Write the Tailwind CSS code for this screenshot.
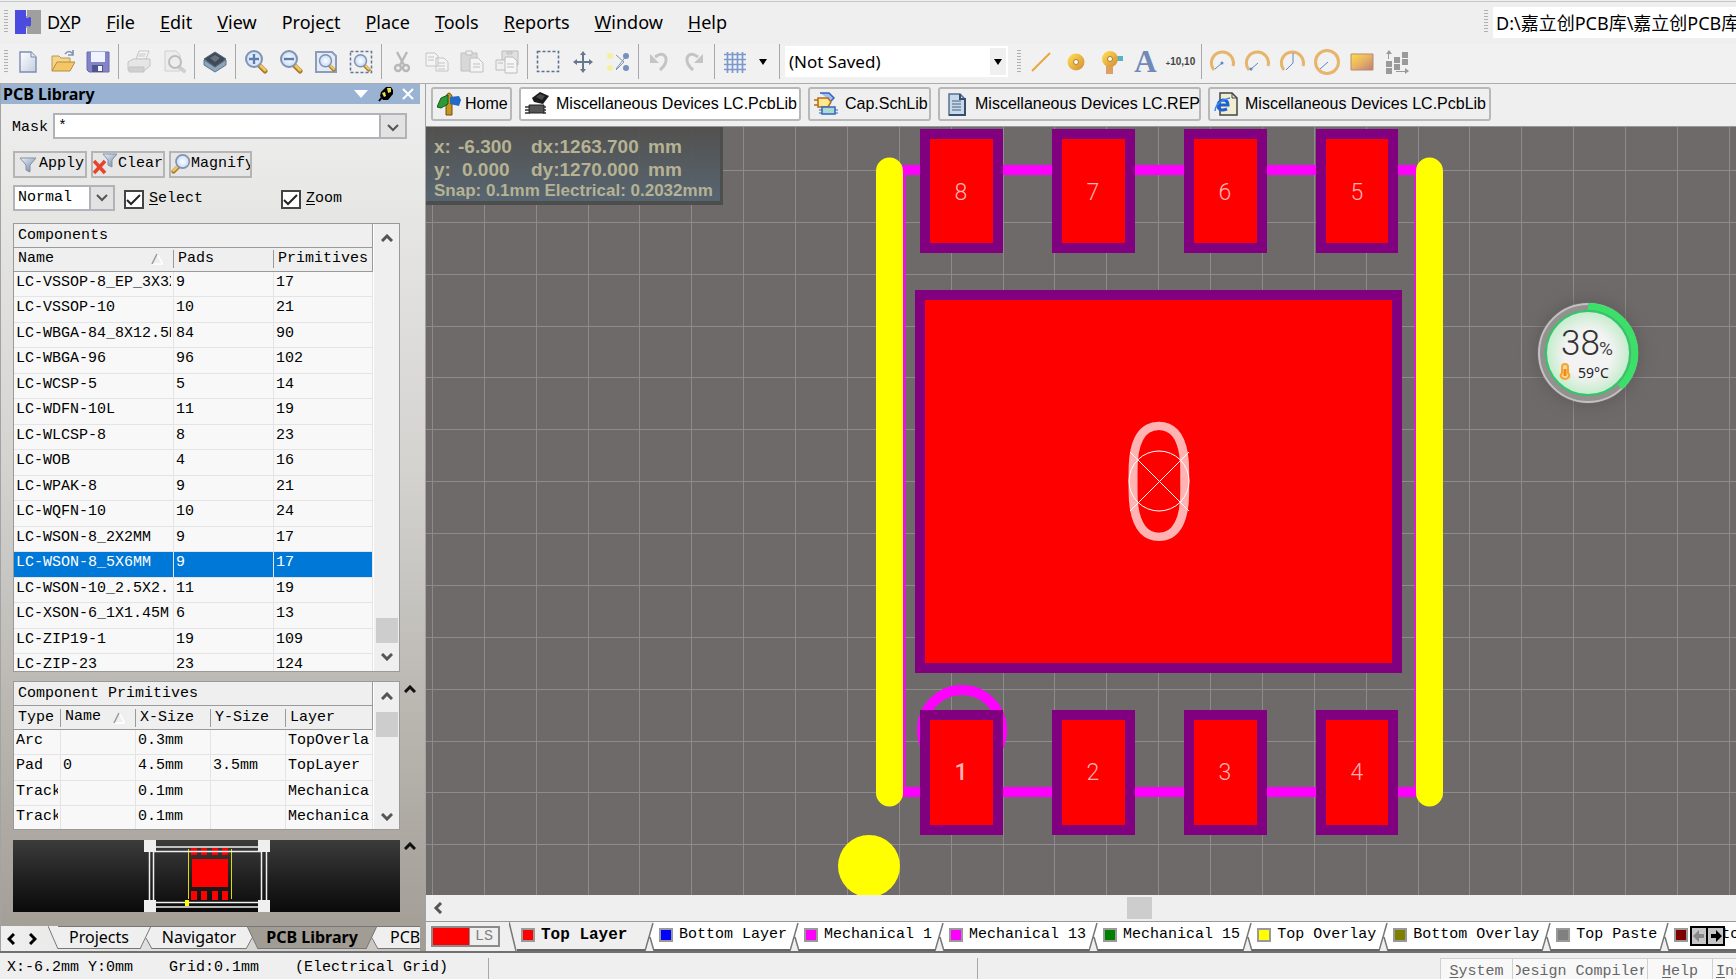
<!DOCTYPE html>
<html lang="en">
<head>
	<meta charset="UTF-8" />
	<meta name="viewport" content="width=device-width, initial-scale=1.0" />
	<script src="https://cdn.jsdelivr.net/npm/@tailwindcss/browser@4"></script>
	<title>PCB Library</title>
</head>

<body class="flex flex-col h-screen overflow-hidden bg-[#efefef] text-black font-['Noto_Sans','Noto_Sans_CJK_SC',sans-serif]">

	<!-- shared gradients -->
	<svg class="absolute w-0 h-0" aria-hidden="true">
		<defs>
			<linearGradient id="gold" x1="0" y1="0" x2="1" y2="1"><stop offset="0" stop-color="#fbd34a" /><stop offset="1" stop-color="#d99a3c" /></linearGradient>
			<linearGradient id="goldPurple" x1="0" y1="0" x2="1" y2="1"><stop offset="0" stop-color="#ffe03c" /><stop offset=".5" stop-color="#e8b268" /><stop offset="1" stop-color="#b98070" /></linearGradient>
			<linearGradient id="paper" x1="0" y1="0" x2="1" y2="1"><stop offset="0" stop-color="#ffffff" /><stop offset="1" stop-color="#c3cde0" /></linearGradient>
			<linearGradient id="steel" x1="0" y1="0" x2="1" y2="1"><stop offset="0" stop-color="#eef3fb" /><stop offset="1" stop-color="#6b7f9e" /></linearGradient>
			<radialGradient id="lens"><stop offset="0" stop-color="#ffffff" /><stop offset="1" stop-color="#c5dcfa" /></radialGradient>
			<radialGradient id="gauge"><stop offset=".55" stop-color="#f3f3f3" /><stop offset="1" stop-color="#c4eccb" /></radialGradient>
			<symbol id="glass" viewBox="0 0 24 24">
				<path d="M15 15l6 6" stroke="#a87928" stroke-width="5" stroke-linecap="round" />
				<path d="M16 15l5 5" stroke="#f0c566" stroke-width="3" stroke-linecap="round" />
				<circle cx="10" cy="9" r="8" fill="url(#lens)" stroke="#8193b0" stroke-width="2" />
			</symbol>
		</defs>
	</svg>

	<!-- menu bar -->
	<header class="flex items-center h-[43px] shrink-0 mt-px pb-0.5 border-t border-[#c3c7c7]">
		<div class="w-1 h-6 ml-1 bg-[repeating-linear-gradient(#b0b0b0_0_1px,#efefef_1px_3px)]"></div>
		<svg class="w-[26px] h-6 ml-[7px]" viewBox="0 0 26 24"><path fill="#a09f9f" d="M11 0h15v24H11z" /><path fill="#4b4be0" d="M0 0h11v8h2q2-2 3 0v7q-1 3-3 1h-2v8H0z" /><path fill="#efefef" d="M11 0h1v6h-1zM11 18h1v6h-1z" /></svg>
		<nav class="flex gap-[25px] ml-1.5 text-lg leading-6">
			<a href="#">D<u class="underline-offset-2">X</u>P</a>
			<a href="#"><u class="underline-offset-2">F</u>ile</a>
			<a href="#"><u class="underline-offset-2">E</u>dit</a>
			<a href="#"><u class="underline-offset-2">V</u>iew</a>
			<a href="#">Proje<u class="underline-offset-2">c</u>t</a>
			<a href="#"><u class="underline-offset-2">P</u>lace</a>
			<a href="#"><u class="underline-offset-2">T</u>ools</a>
			<a href="#"><u class="underline-offset-2">R</u>eports</a>
			<a href="#"><u class="underline-offset-2">W</u>indow</a>
			<a href="#"><u class="underline-offset-2">H</u>elp</a>
		</nav>
		<div class="w-1 h-6 ml-auto mr-[5px] bg-[repeating-linear-gradient(#b0b0b0_0_1px,#efefef_1px_3px)]"></div>
		<input aria-label="Document path" class="w-[243px] h-[31px] pl-[3px] bg-white text-lg outline-none" value="D:\嘉立创PCB库\嘉立创PCB库" />
	</header>

	<!-- tool bar -->
	<div class="flex items-center h-10 shrink-0 pb-1 bg-[#f1f1f1] border-b border-[#acacac]">
		<div class="w-1 h-6 ml-1 mr-0.5 bg-[repeating-linear-gradient(#b0b0b0_0_1px,#efefef_1px_3px)]"></div>
		<button aria-label="New" class="flex justify-center w-[35px]"><svg class="size-6" viewBox="0 0 24 24"><path d="M4 2h11l5 5v15H4z" fill="url(#paper)" stroke="#7c8db0" stroke-width="1.4" /><path d="M15 2v5h5" fill="#dfe6f2" stroke="#7c8db0" /></svg></button>
		<button aria-label="Open" class="flex justify-center w-[35px]"><svg class="size-6" viewBox="0 0 24 24"><path d="M1 21V6h7l2 2h9v4" fill="#f4d58a" stroke="#b99758" /><path d="M1 21l5-9h18l-5 9z" fill="#f3c766" stroke="#b58c3e" /><path d="M14 4q4-5 8 0m0-4v5h-5" fill="none" stroke="#7f92b8" stroke-width="1.6" /></svg></button>
		<button aria-label="Save" class="flex justify-center w-[35px]"><svg class="size-6" viewBox="0 0 24 24"><path d="M1 2h22v20H3l-2-2z" fill="#8383c6" stroke="#6a6aae" /><path d="M5 2h14v10H5z" fill="#eef3ff" /><path d="M6 15h11v7H6z" fill="#4c5590" /><path d="M12 16h4v5h-4z" fill="#f3f3fa" /></svg></button>
		<span class="w-px h-[35px] ml-[3px] mr-0.5 bg-[#a8a8a8]"></span>
		<button aria-label="Print" class="flex justify-center w-[35px]"><svg class="size-6" viewBox="0 0 24 24" fill="#e6e6e6" stroke="#c4c4c4"><path d="M9 9l3-8h10l-3 8z" fill="#f6f6f6" /><path d="M1 12l5-3h17v7l-5 4H1z" /><path d="M2 17h15v5H2z" fill="#d0d0d0" /><path d="M12 4h7M11 6h7" /></svg></button>
		<button aria-label="Print preview" class="flex justify-center w-[35px]"><svg class="size-6" viewBox="0 0 24 24" fill="#ededed" stroke="#cfcfcf"><path d="M3 1h11l4 4v16H3z" /><path d="M17 17l5 4" stroke-width="4" stroke-linecap="round" /><circle cx="13" cy="12" r="6" stroke="#bdbdbd" stroke-width="2" /></svg></button>
		<span class="w-px h-[35px] ml-[3px] mr-0.5 bg-[#a8a8a8]"></span>
		<button aria-label="Board layers" class="flex justify-center w-[35px]"><svg class="size-6" viewBox="0 0 24 24"><path d="M1 10l11 7 11-7v5l-11 7-11-7z" fill="#8ea5bb" stroke="#5d748a" /><path d="M1 9l11-7 11 7-11 8z" fill="#3f4a56" stroke="#566779" /><path d="M7 8l5-3 5 3-5 4z" fill="#65727f" /></svg></button>
		<span class="w-px h-[35px] ml-[3px] mr-0.5 bg-[#a8a8a8]"></span>
		<button aria-label="Zoom in" class="flex justify-center w-[35px]"><svg class="size-6" viewBox="0 0 24 24"><use href="#glass" /><path d="M10 4v10M5 9h10" stroke="#5c7cab" stroke-width="2.4" /></svg></button>
		<button aria-label="Zoom out" class="flex justify-center w-[35px]"><svg class="size-6" viewBox="0 0 24 24"><use href="#glass" /><path d="M5 9h10" stroke="#5c7cab" stroke-width="2.4" /></svg></button>
		<button aria-label="Fit document" class="flex justify-center w-[35px]"><svg class="size-6" viewBox="0 0 24 24"><path d="M2 2h16l4 4v16H2z" fill="#e3ebf7" stroke="#8d9cb8" stroke-width="2" /><g transform="translate(4 4) scale(.75)"><use href="#glass" width="24" height="24" /></g></svg></button>
		<button aria-label="Fit selection" class="flex justify-center w-[35px]"><svg class="size-6" viewBox="0 0 24 24"><path d="M1.500 1.500h21v21h-21z" fill="none" stroke="#66748f" stroke-width="1.500" stroke-dasharray="3 2" /><g transform="translate(4 4) scale(.75)"><use href="#glass" width="24" height="24" /></g></svg></button>
		<span class="w-px h-[35px] ml-[3px] mr-0.5 bg-[#a8a8a8]"></span>
		<button aria-label="Cut" class="flex justify-center w-[35px]"><svg class="size-6" viewBox="0 0 24 24" fill="none" stroke="#b8b8b8" stroke-width="2.4"><path d="M7 2l7 13M17 2l-7 13" /><circle cx="8" cy="18" r="3" /><circle cx="16" cy="18" r="3" /></svg></button>
		<button aria-label="Copy" class="flex justify-center w-[35px]"><svg class="size-6" viewBox="0 0 24 24" fill="#f4f4f4" stroke="#c4c4c4"><path d="M1 3h9l3 3v10H1zM11 8h8l4 4v9H11z" /><path d="M3 7h6M3 10h6M13 13h7M13 16h7M13 19h7" /></svg></button>
		<button aria-label="Paste" class="flex justify-center w-[35px]"><svg class="size-6" viewBox="0 0 24 24" fill="#d8d8d8" stroke="#c0c0c0"><path d="M1 3h16v18H1z" /><path d="M6 1h6v4H6z" fill="#eee" /><path d="M10 8h8l5 5v9H10z" fill="#f4f4f4" /><path d="M13 14h7M13 17h7" /></svg></button>
		<button aria-label="Paste array" class="flex justify-center w-[35px]"><svg class="size-6" viewBox="0 0 24 24" fill="#e0e0e0" stroke="#bcbcbc"><path d="M7 1h16v14H7z" /><path d="M1 10h10v10H1z" fill="#f0f0f0" /><path d="M10 7h8l4 4v12H10z" fill="#f6f6f6" /><path d="M12 2h5v2h-5zM12 14h7M12 17h7M3 13h5" /></svg></button>
		<span class="w-px h-[35px] ml-[3px] mr-0.5 bg-[#a8a8a8]"></span>
		<button aria-label="Select area" class="flex justify-center w-[35px]"><svg class="size-6" viewBox="0 0 24 24"><path d="M1.500 1.500h21v20h-21z" fill="none" stroke="#5d7090" stroke-width="1.600" stroke-dasharray="3 2" /></svg></button>
		<button aria-label="Move" class="flex justify-center w-[35px]"><svg class="size-6" viewBox="0 0 24 24" fill="#667890"><path d="M11 4h2v16h-2zM4 11h16v2H4z" /><path d="M12 1l3 4H9zM12 23l3-4H9zM2 12l4-3v6zM22 12l-4-3v6z" /></svg></button>
		<button aria-label="Clear filter" class="flex justify-center w-[35px]"><svg class="size-6" viewBox="0 0 24 24"><path d="M10 5l8 7-8 8M21 5l-11 14" fill="none" stroke="#8193b0" /><circle cx="4" cy="6" r="3" fill="#f6efa0" /><circle cx="4" cy="18" r="3" fill="#f6efa0" /><circle cx="20" cy="6" r="3" fill="#7790bd" /><circle cx="20" cy="18" r="3" fill="#7790bd" /></svg></button>
		<span class="w-px h-[35px] ml-[3px] mr-0.5 bg-[#a8a8a8]"></span>
		<button aria-label="Undo" class="flex justify-center w-[35px]"><svg class="size-6" viewBox="0 0 24 24" fill="none" stroke="#c4c4c4" stroke-width="3"><path d="M8 7q8-6 11 1 1 6-6 12" /><path d="M3 4v9h9z" fill="#c4c4c4" stroke="none" /></svg></button>
		<button aria-label="Redo" class="flex justify-center w-[35px]"><svg class="size-6" viewBox="0 0 24 24" fill="none" stroke="#c4c4c4" stroke-width="3"><path d="M16 7Q8 1 5 8q-1 6 6 12" /><path d="M21 4v9h-9z" fill="#c4c4c4" stroke="none" /></svg></button>
		<span class="w-px h-[35px] ml-[3px] mr-0.5 bg-[#a8a8a8]"></span>
		<button aria-label="Grid" class="flex justify-center w-[35px]"><svg class="size-6" viewBox="0 0 24 24"><path d="M4.500 2v21M9.500 2v21M14.500 2v21M19.500 2v21M1 4.500h22M1 9.500h22M1 14.500h22M1 19.500h22" stroke="#7b98cf" stroke-width="1.700" /></svg></button>
		<button aria-label="Grid options" class="flex justify-center w-[22px]"><svg class="w-2 h-1.5" viewBox="0 0 8 6"><path d="M0 0h8L4 6z" /></svg></button>
		<span class="w-px h-[35px] mx-[5px] bg-[#a8a8a8]"></span>
		<div class="flex items-center w-[223px] h-[31px] bg-white">
			<select aria-label="Saved filter" class="flex-1 h-full pl-1 appearance-none text-[17px] outline-none"><option>(Not Saved)</option></select>
			<span class="flex items-center justify-center w-4 h-[27px] mr-0.5 bg-[#f0f0f0] pointer-events-none"><svg class="w-2 h-1.5" viewBox="0 0 8 6"><path d="M0 0h8L4 6z" /></svg></span>
		</div>
		<div class="w-1 h-6 ml-[9px] mr-0.5 bg-[repeating-linear-gradient(#b0b0b0_0_1px,#efefef_1px_3px)]"></div>
		<button aria-label="Place line" class="flex justify-center w-[35px]"><svg class="size-6" viewBox="0 0 24 24"><path d="M3 21L21 3" stroke="#e3a93e" stroke-width="2" /></svg></button>
		<button aria-label="Place pad" class="flex justify-center w-[35px]"><svg class="size-6" viewBox="0 0 24 24"><circle cx="12" cy="12" r="5.500" fill="none" stroke="url(#gold)" stroke-width="6" /><circle cx="12" cy="12" r="2.500" fill="#fff" stroke="#a87a28" /></svg></button>
		<button aria-label="Place via" class="flex justify-center w-[35px]"><svg class="size-6" viewBox="0 0 24 24"><path d="M14 6h10v5H14z" fill="#58b0cc" /><path d="M7 12h7v12H7z" fill="#dda060" /><circle cx="11" cy="9" r="5" fill="none" stroke="url(#gold)" stroke-width="6" /><circle cx="11" cy="9" r="2.500" fill="#fff" stroke="#a87a28" /></svg></button>
		<button aria-label="Place string" class="w-[35px] h-8 text-[31px] leading-8 font-bold text-[#6f89b8] font-['Liberation_Serif',serif]">A</button>
		<button aria-label="Place coordinate" class="w-[35px] text-[10px] leading-6 font-bold text-[#444] font-['Liberation_Sans',sans-serif]"><sub>+</sub>10,10</button>
		<span class="w-px h-[35px] ml-[3px] mr-0.5 bg-[#a8a8a8]"></span>
		<button aria-label="Arc by centre" class="flex justify-center w-[35px]"><svg class="size-[26px]" viewBox="0 0 26 26"><path d="M5 21A11 11 0 1 1 24 17" fill="none" stroke="#e6b56b" stroke-width="3" /><path d="M6 20l7-6" stroke="#5a86cf" /><circle cx="13" cy="14" r="1.500" fill="#5a86cf" /></svg></button>
		<button aria-label="Arc by edge" class="flex justify-center w-[35px]"><svg class="size-[26px]" viewBox="0 0 26 26"><path d="M5 21A11 11 0 1 1 24 17" fill="none" stroke="#e6b56b" stroke-width="3" /><path d="M7 20l7-6" stroke="#5a86cf" /><circle cx="7" cy="20" r="1.500" fill="#5a86cf" /></svg></button>
		<button aria-label="Arc any angle" class="flex justify-center w-[35px]"><svg class="size-[26px]" viewBox="0 0 26 26"><path d="M5 21A11 11 0 1 1 24 17" fill="none" stroke="#e6b56b" stroke-width="3" /><path d="M14 4v10l-7 7" fill="none" stroke="#5a86cf" /></svg></button>
		<button aria-label="Full circle" class="flex justify-center w-[35px]"><svg class="size-[26px]" viewBox="0 0 26 26"><circle cx="13" cy="13" r="11.500" fill="none" stroke="#e6b56b" stroke-width="3" /><path d="M6 20l8-7" stroke="#5a86cf" /></svg></button>
		<button aria-label="Fill" class="flex justify-center w-[35px]"><svg class="size-6" viewBox="0 0 24 24"><path d="M1 4h22v16H1z" fill="url(#goldPurple)" stroke="#b78a76" /></svg></button>
		<button aria-label="Array" class="flex justify-center w-[35px]"><svg class="size-6" viewBox="0 0 24 24" fill="#9a9a9a"><path d="M1 11h6v6H1zM1 18h6v6H1zM9 7h6v6H9zM9 14h6v6H9zM17 2h6v6h-6zM17 9h6v6h-6z" /><path d="M3 2h1v7H3zM4 0l3 4H1zM11 21h9v1h-9zM24 21l-4-3v6z" /></svg></button>
	</div>

	<main class="flex flex-1 min-h-0">

		<!-- left panel -->
		<aside class="flex flex-col w-[426px] shrink-0 border-x border-[#a3a3a3] bg-linear-to-b from-[#f0f0f0] via-[#d3d2cf] via-45% to-[#a19c94] text-[15px] font-['Liberation_Mono',monospace]">
			<div class="flex items-center h-5 mr-[5px] shrink-0 pl-0.5 bg-[#9ab3d2] font-['Noto_Sans',sans-serif]">
				<h1 class="flex-1 text-base leading-5 font-bold">PCB Library</h1>
				<button aria-label="Panel menu"><svg class="w-[14px] h-2" viewBox="0 0 14 8"><path d="M0 0h14L7 8z" fill="#fff" /></svg></button>
				<button aria-label="Pin" class="ml-2.5"><svg class="size-4" viewBox="0 0 16 16"><path d="M1 15l4-5" stroke="#000" stroke-width="2" /><path d="M3 6l5-5h5l2 3v4l-5 6H5L2 10z" fill="#000" /><path d="M9 2h4v4l-3 1zM4 7l3-1 1 4-2 1z" fill="#e8e04a" /></svg></button>
				<button aria-label="Close" class="ml-2 mr-1.5"><svg class="size-3" viewBox="0 0 12 12"><path d="M1 1l10 10M11 1L1 11" stroke="#fff" stroke-width="2" /></svg></button>
			</div>

			<div class="flex items-center mt-[9px] pl-[11px] pr-[18px]">
				<label for="mask" class="w-[41px] pt-1">Mask</label>
				<div class="flex flex-1 h-[26px] border-2 border-[#b1b3b8] bg-white">
					<input id="mask" class="flex-1 min-w-0 px-[3px] pt-0.5 outline-none" value="*" />
					<button aria-label="Mask list" class="flex items-center justify-center w-[26px] pt-1 border-l-2 border-[#b1b3b8] bg-[#e2e2e2]"><svg class="w-3 h-2" viewBox="0 0 12 8"><path d="M1 1l5 5 5-5" fill="none" stroke="#555" stroke-width="2" /></svg></button>
				</div>
			</div>

			<div class="flex gap-1 mt-[11px] pl-3">
				<button class="flex items-center w-[74px] h-[27px] pl-0.5 border-2 border-[#b5b5b5] bg-[#e6e6e6] overflow-hidden"><svg class="w-[22px] h-5 shrink-0" viewBox="0 0 22 20"><path d="M3 4h16l-6 7v7l-4-2v-5z" fill="url(#steel)" stroke="#8291a8" /></svg>Apply</button>
				<button class="flex items-center w-[74px] h-[27px] border-2 border-[#b5b5b5] bg-[#e6e6e6] overflow-hidden"><svg class="w-[25px] h-6 shrink-0" viewBox="0 0 25 24"><path d="M10 2h14l-5 6v7l-4-2V8z" fill="url(#steel)" stroke="#8291a8" /><path d="M1 9l11 12M12 9L1 21" stroke="#e8432c" stroke-width="3.500" /></svg>Clear</button>
				<button class="flex items-center w-[83px] h-[27px] border-2 border-[#b5b5b5] bg-[#e6e6e6] overflow-hidden"><svg class="w-5 h-[22px] shrink-0 -scale-x-100" viewBox="0 0 24 24"><use href="#glass" width="24" height="24" /></svg>Magnify</button>
			</div>

			<div class="flex items-center h-[26px] mt-[7px] pl-3">
				<div class="flex w-[102px] h-[26px] border-2 border-[#b1b3b8] bg-white">
					<select aria-label="Selection mode" class="flex-1 min-w-0 pl-[3px] appearance-none outline-none"><option>Normal</option></select>
					<span class="flex items-center justify-center w-6 border-l-2 border-[#b1b3b8] bg-[#e2e2e2] pointer-events-none"><svg class="w-3 h-2" viewBox="0 0 12 8"><path d="M1 1l5 5 5-5" fill="none" stroke="#555" stroke-width="2" /></svg></span>
				</div>
				<label class="flex items-center gap-[5px] w-[157px] ml-[9px] pt-1">
					<span class="grid place-items-center">
						<input type="checkbox" checked class="peer col-start-1 row-start-1 w-5 h-[19px] appearance-none border-2 border-[#444] bg-white" />
						<svg class="col-start-1 row-start-1 w-4 h-3 invisible peer-checked:visible pointer-events-none" viewBox="0 0 16 12"><path d="M1 6l4 4L14 1" fill="none" stroke="#222" stroke-width="2" /></svg>
					</span>
					<span><u class="underline-offset-2">S</u>elect</span>
				</label>
				<label class="flex items-center gap-[5px] pt-1">
					<span class="grid place-items-center">
						<input type="checkbox" checked class="peer col-start-1 row-start-1 w-5 h-[19px] appearance-none border-2 border-[#444] bg-white" />
						<svg class="col-start-1 row-start-1 w-4 h-3 invisible peer-checked:visible pointer-events-none" viewBox="0 0 16 12"><path d="M1 6l4 4L14 1" fill="none" stroke="#222" stroke-width="2" /></svg>
					</span>
					<span><u class="underline-offset-2">Z</u>oom</span>
				</label>
			</div>

			<!-- component list -->
			<section class="flex flex-1 min-h-0 mt-3 ml-3 mr-[25px] border border-[#9a9a9a] bg-[#f8f8f8]">
				<div class="flex-1 overflow-hidden">
					<h2 class="h-6 pl-1 leading-6 bg-[#efefef] border-b border-r border-[#9a9a9a]">Components</h2>
					<table class="w-full table-fixed border-separate border-spacing-0">
						<colgroup><col class="w-[160px]" /><col class="w-[100px]" /><col /></colgroup>
						<thead>
							<tr class="h-6 text-left bg-[#efefef]">
								<th class="font-normal border-b border-[#9a9a9a]"><div class="flex items-center justify-between h-[18px] pl-1 pr-2.5 border-r border-[#9a9a9a]">Name<svg class="w-3 h-3" viewBox="0 0 12 12"><path d="M6 1l6 10H1" fill="none" stroke="#fff" stroke-width="1.500" /><path d="M1 11L6 1" stroke="#999" stroke-width="1.500" /></svg></div></th>
								<th class="font-normal border-b border-[#9a9a9a]"><div class="h-[18px] pl-1 leading-[18px] border-r border-[#9a9a9a]">Pads</div></th>
								<th class="font-normal border-b border-r border-[#9a9a9a]"><div class="h-[18px] pl-1 leading-[18px]">Primitives</div></th>
							</tr>
						</thead>
						<tbody id="components"></tbody>
					</table>
				</div>
				<div class="flex flex-col items-center w-[26px] py-2.5 bg-[#efefef] border-l border-white">
					<svg class="w-3 h-2" viewBox="0 0 12 8"><path d="M1 7l5-5 5 5" fill="none" stroke="#555" stroke-width="3" /></svg>
					<div class="w-[22px] h-[25px] mt-auto bg-[#cdcdcd]"></div>
					<svg class="w-3 h-2 mt-2.5" viewBox="0 0 12 8"><path d="M1 1l5 5 5-5" fill="none" stroke="#555" stroke-width="3" /></svg>
				</div>
			</section>

			<!-- primitives of the selected component -->
			<div class="flex h-[149px] mt-[9px] ml-3 shrink-0">
				<section class="flex w-[387px] border border-[#9a9a9a] bg-[#f8f8f8]">
					<div class="flex-1 overflow-hidden">
						<h2 class="h-6 pl-1 leading-6 bg-[#efefef] border-b border-r border-[#9a9a9a]">Component Primitives</h2>
						<table class="w-full table-fixed border-separate border-spacing-0">
							<colgroup><col class="w-[47px]" /><col class="w-[75px]" /><col class="w-[75px]" /><col class="w-[75px]" /><col /></colgroup>
							<thead>
								<tr class="h-6 text-left bg-[#efefef]">
									<th class="font-normal border-b border-[#9a9a9a]"><div class="h-[18px] pl-1 leading-[18px] border-r border-[#9a9a9a]">Type</div></th>
									<th class="font-normal border-b border-[#9a9a9a]"><div class="flex items-center justify-between h-[18px] pl-1 pr-2.5 border-r border-[#9a9a9a]">Name<svg class="w-3 h-3" viewBox="0 0 12 12"><path d="M6 1l6 10H1" fill="none" stroke="#fff" stroke-width="1.500" /><path d="M1 11L6 1" stroke="#999" stroke-width="1.500" /></svg></div></th>
									<th class="font-normal border-b border-[#9a9a9a]"><div class="h-[18px] pl-1 leading-[18px] border-r border-[#9a9a9a]">X-Size</div></th>
									<th class="font-normal border-b border-[#9a9a9a]"><div class="h-[18px] pl-1 leading-[18px] border-r border-[#9a9a9a]">Y-Size</div></th>
									<th class="font-normal border-b border-r border-[#9a9a9a]"><div class="h-[18px] pl-1 leading-[18px]">Layer</div></th>
								</tr>
							</thead>
							<tbody id="primitives"></tbody>
						</table>
					</div>
					<div class="flex flex-col items-center w-[26px] py-2 bg-[#efefef] border-l border-white">
						<svg class="w-3 h-2 mt-0.5" viewBox="0 0 12 8"><path d="M1 7l5-5 5 5" fill="none" stroke="#555" stroke-width="3" /></svg>
						<div class="w-[22px] h-[25px] mt-3 bg-[#cdcdcd]"></div>
						<svg class="w-3 h-2 mt-auto" viewBox="0 0 12 8"><path d="M1 1l5 5 5-5" fill="none" stroke="#555" stroke-width="3" /></svg>
					</div>
				</section>
				<button aria-label="Collapse primitives" class="self-start ml-1 mt-1"><svg class="w-3 h-2" viewBox="0 0 12 8"><path d="M1 7l5-5 5 5" fill="none" stroke="#111" stroke-width="3" /></svg></button>
			</div>

			<!-- preview -->
			<div class="flex h-[72px] mt-2.5 ml-3 shrink-0">
				<div class="flex justify-center w-[387px] bg-linear-to-b from-[#3c3c3c] to-[#0a0a0a]">
					<svg class="w-[126px] h-[72px]" viewBox="0 0 126 72">
						<path d="M47 8h6v7h-6zM57 8h6v7h-6zM68 8h6v7h-6zM78 8h6v7h-6zM48 19h36v28H48zM47 51h6v9h-6zM57 51h6v9h-6zM68 51h6v9h-6zM78 51h6v9h-6z" fill="#f00" />
						<path d="M44.500 9v50M87.500 9v50" stroke="#dcdc00" />
						<path d="M5.500 7h117v60h-117zM9.500 11.500h108v51h-108z" fill="none" stroke="#efefef" stroke-width="1.500" />
						<path d="M43 60v6" stroke="#ff0" stroke-width="4" />
						<path d="M0 0h12v12H0zM114 0h12v12h-12zM0 60h12v12H0zM114 60h12v12h-12z" fill="#efefef" />
					</svg>
				</div>
				<button aria-label="Collapse preview" class="self-start ml-1 mt-0.5"><svg class="w-3 h-2" viewBox="0 0 12 8"><path d="M1 7l5-5 5 5" fill="none" stroke="#111" stroke-width="3" /></svg></button>
			</div>

			<!-- panel tabs -->
			<div class="flex h-[25px] mt-[14px] mr-[5px] shrink-0 bg-linear-to-r from-[#f0f0f0] to-[#c6c3be] text-base leading-[18px] font-['Noto_Sans',sans-serif] overflow-hidden">
				<button aria-label="Previous tab" class="ml-1.5"><svg class="w-2 h-3" viewBox="0 0 8 12"><path d="M7 1L2 6l5 5" fill="none" stroke="#000" stroke-width="3" /></svg></button>
				<button aria-label="Next tab" class="ml-[14px]"><svg class="w-2 h-3" viewBox="0 0 8 12"><path d="M1 1l5 5-5 5" fill="none" stroke="#000" stroke-width="3" /></svg></button>
				<svg class="w-2.5 h-[23px] ml-[11px] shrink-0" viewBox="0 0 10 23"><path d="M0 0h10v23z" fill="#efefef" /><path d="M0 0l10 23" stroke="#777" /></svg>
				<button class="w-[82px] h-[23px] pb-0.5 shrink-0 bg-[#efefef] border-y border-[#777]">Projects</button>
				<svg class="w-3 h-[23px] shrink-0" viewBox="0 0 12 23"><path d="M0 0h12v23L6 12 0 23z" fill="#efefef" /><path d="M0 23L11 0M6 12l6 11" fill="none" stroke="#777" /><path d="M0 0h12" stroke="#777" stroke-width="2" /></svg>
				<button class="w-[94px] h-[23px] pb-0.5 shrink-0 bg-[#efefef] border-y border-[#777]">Navigator</button>
				<svg class="w-3 h-[23px] shrink-0" viewBox="0 0 12 23"><path d="M0 0h1l5 12-6 11z" fill="#efefef" /><path d="M1 0h11v23z" fill="#a19c94" /><path d="M1 0l11 23M6 12L0 23" fill="none" stroke="#777" /><path d="M0 0h12" stroke="#777" stroke-width="2" /></svg>
				<button class="w-[108px] h-[23px] pb-0.5 shrink-0 bg-[#a19c94] border-y border-[#777] font-bold">PCB Library</button>
				<svg class="w-3 h-[23px] shrink-0" viewBox="0 0 12 23"><path d="M0 0h11L0 23z" fill="#a19c94" /><path d="M11 0h1v23L6 12z" fill="#efefef" /><path d="M0 23L11 0M6 12l6 11" fill="none" stroke="#777" /><path d="M0 0h12" stroke="#777" stroke-width="2" /></svg>
				<button class="w-12 h-[23px] pl-3 pb-0.5 shrink-0 bg-[#efefef] border-y border-[#777] text-left">PCB</button>
			</div>
		</aside>

		<!-- editor -->
		<section class="flex flex-col flex-1 min-w-0">
			<div class="flex items-start gap-[7px] h-[43px] shrink-0 pt-[3px] pl-[5px] border-b border-[#999] text-base leading-5 font-['Liberation_Sans',sans-serif] whitespace-nowrap">
				<button class="flex items-center gap-1 w-[81px] h-[34px] pl-1 border-2 border-[#b8b8b8] rounded-[3px]"><svg class="size-6 shrink-0" viewBox="0 0 24 24"><path d="M9 4q3-6 6 0v19H9z" fill="#c79622" stroke="#6f4f0c" /><path d="M0 15l4-9 7-3v9l-7 4z" fill="#2c9a35" stroke="#125a18" /><path d="M13 5l9-1 2 4-2 6-9-2z" fill="#2468c8" /></svg>Home</button>
				<button class="flex items-center gap-[7px] w-[282px] h-[34px] pl-1 border-2 border-[#b8b8b8] rounded-[3px] bg-white"><svg class="size-6 shrink-0" viewBox="0 0 24 24"><path d="M7 6l8-6 9 4-6 8-9-2z" fill="#1c1c1c" /><path d="M4 13h15v8H4z" fill="#555" stroke="#222" /><path d="M0 15h5M0 18h5M0 21h5M18 15h3M18 18h3M18 21h3" stroke="#333" stroke-width="1.500" /><path d="M11 5l4-3 5 2-3 4z" fill="#4a4a4a" /></svg>Miscellaneous Devices LC.PcbLib</button>
				<button class="flex items-center gap-[7px] w-[123px] h-[34px] pl-1 border-2 border-[#b8b8b8] rounded-[3px]"><svg class="size-6 shrink-0" viewBox="0 0 24 24"><path d="M6 1h9l5 5-3 3" fill="#9fc0f4" stroke="#3465bd" stroke-width="1.500" /><path d="M4 6h10l3 4-3 5H4z" fill="#ffe98c" stroke="#b96a14" stroke-width="1.500" /><path d="M0 8h4M0 13h4" stroke="#b96a14" stroke-width="1.500" /><path d="M8 15h13v7H8z" fill="#a9dcd0" stroke="#3465bd" stroke-width="1.500" /><path d="M5 18h3M5 21h3M21 18h3M21 21h3" stroke="#3465bd" /></svg>Cap.SchLib</button>
				<button class="flex items-center gap-[7px] w-[263px] h-[34px] pl-1 border-2 border-[#b8b8b8] rounded-[3px]"><svg class="size-6 shrink-0" viewBox="0 0 24 24"><path d="M5 2h11l5 5v16H5z" fill="#c9d8e8" stroke="#55718f" stroke-width="1.500" /><path d="M16 2v5h5v16H5" fill="none" stroke="#34506e" stroke-width="2" /><path d="M8 9h9M8 12h9M8 15h9M8 18h9" stroke="#6d89a8" stroke-width="1.500" /></svg>Miscellaneous Devices LC.REP</button>
				<button class="flex items-center gap-[7px] w-[283px] h-[34px] pl-1 border-2 border-[#b8b8b8] rounded-[3px]"><svg class="size-6 shrink-0" viewBox="0 0 24 24"><path d="M6 1h12l5 5v17H6z" fill="#f1edd2" stroke="#444" stroke-width="1.500" /><path d="M18 1v5h5" fill="none" stroke="#444" /><path d="M5 13h9q0-5-5-5-5 1-5 6 1 6 9 3" fill="none" stroke="#1f5fd0" stroke-width="3" /><path d="M1 19Q2 9 16 6" fill="none" stroke="#3f86e8" stroke-width="1.500" /></svg>Miscellaneous Devices LC.PcbLib</button>
			</div>

			<!-- footprint canvas -->
			<div class="relative flex-1 min-h-0 bg-[#6e6a69] overflow-hidden">
				<svg class="w-full h-full" font-family="Roboto, sans-serif" font-size="23" font-weight="300" fill="#ffb3b3" text-anchor="middle">
					<path id="grid" stroke="#8d8b8c" />
					<g transform="translate(-426 -127)">
						<path d="M904 170h512v622H904z" fill="none" stroke="#f0f" stroke-width="3" />
						<path d="M890 170h540M890 792h540" stroke="#f0f" stroke-width="10" />
						<circle cx="962" cy="730" r="40" fill="none" stroke="#f0f" stroke-width="10" />
						<path d="M889.500 171v622M1429.500 171v622" stroke="#ff0" stroke-width="27" stroke-linecap="round" />
						<circle cx="869" cy="866" r="31" fill="#ff0" />
						<g fill="#f00" stroke="#800080" stroke-width="10">
							<path d="M925 134h73v114h-73zM1057 134h73v114h-73zM1189 134h73v114h-73zM1321 134h72v114h-72z" />
							<path d="M925 715h73v115h-73zM1057 715h73v115h-73zM1189 715h73v115h-73zM1321 715h72v115h-72z" />
							<path d="M920 295h477v373H920z" />
						</g>
						<text x="961" y="200">8</text>
						<text x="1093" y="200">7</text>
						<text x="1225" y="200">6</text>
						<text x="1357" y="200">5</text>
						<text x="961" y="780" font-weight="500">1</text>
						<text x="1093" y="780">2</text>
						<text x="1225" y="780">3</text>
						<text x="1357" y="780">4</text>
						<text x="1159" y="539" font-family="Roboto Condensed, Roboto, sans-serif" font-size="164" font-weight="300">0</text>
						<g fill="none" stroke="#fff">
							<circle cx="1159" cy="481" r="30" />
							<path d="M1130 452l59 59M1189 452l-59 59" />
						</g>
					</g>
				</svg>

				<!-- heads-up display -->
				<div class="absolute left-0 top-0 w-[297px] h-[78px] pl-2 pt-2 border-[#4c4d4b]/90 border-r-3 border-b-4 bg-linear-to-b from-[#50504e]/95 to-[#566571]/95 text-[#b5b393] font-bold font-['Liberation_Sans',sans-serif] whitespace-nowrap">
					<div class="flex text-[19px] leading-[23px]"><span class="w-6">x:</span><span class="w-[73px]">-6.300</span><span class="w-[117px]">dx:1263.700</span><span>mm</span></div>
					<div class="flex text-[19px] leading-[23px]"><span class="w-7">y:</span><span class="w-[69px]">0.000</span><span class="w-[117px]">dy:1270.000</span><span>mm</span></div>
					<div class="text-[17px] leading-5">Snap: 0.1mm Electrical: 0.2032mm</div>
				</div>

				<!-- temperature gauge -->
				<div class="absolute left-[1111px] top-[175px] size-[102px] rounded-full shadow-[0_0_16px_#5c5959]">
					<svg class="size-full" viewBox="0 0 102 102">
						<circle cx="51" cy="51" r="46" fill="none" stroke="#929190" stroke-width="7" />
						<circle cx="51" cy="51" r="49" fill="none" stroke="#c2c1c0" stroke-width="2" />
						<path d="M51 4.500A46.500 46.500 0 0 1 83 85" fill="none" stroke="#3be068" stroke-width="7" />
						<circle cx="51" cy="51" r="42" fill="url(#gauge)" stroke="#2fc968" stroke-width="2" />
						<text x="24" y="53" font-family="Roboto" font-weight="300" font-size="35" fill="#333">38</text>
						<text x="62" y="53" font-family="Roboto" font-size="19" fill="#444">%</text>
						<path d="M25 65q0-3 3-3t3 3v6q2 2 1 4-4 4-8 0-1-2 1-4z" fill="#fcd9a0" stroke="#f7a531" stroke-width="2" />
						<path d="M28 67v7" stroke="#f08a10" stroke-width="3" />
						<text x="41" y="76" font-family="Noto Sans" font-size="14" fill="#222">59°C</text>
					</svg>
				</div>
			</div>

			<!-- horizontal scroll bar -->
			<div class="flex items-center h-[26px] shrink-0 pl-[7px] bg-[#efefef]">
				<svg class="w-2.5 h-3" viewBox="0 0 10 12"><path d="M8 1L3 6l5 5" fill="none" stroke="#555" stroke-width="3" /></svg>
				<div class="w-[25px] h-[22px] ml-[684px] bg-[#cdcdcd]"></div>
			</div>

			<!-- layer tabs -->
			<div class="relative flex h-[30px] shrink-0 border-t border-[#999] overflow-hidden text-[15px] leading-[26px] whitespace-nowrap font-['Liberation_Mono',monospace]">
				<button class="flex w-[69px] h-[21px] mt-1 ml-[5px] shrink-0 border-2 border-[#8b8b8b] text-[#808080] leading-[18px]"><span class="w-[37px] h-full mr-[5px] bg-[#f00] border-r border-[#8b8b8b]"></span>LS</button>
				<svg class="w-2 h-[29px] ml-[9px] shrink-0" viewBox="0 0 8 29"><path d="M0 0l7 29" stroke="#777" stroke-width="1.500" /></svg>
				<button class="flex w-[128px] h-[29px] pl-1 shrink-0 border-b-2 border-[#666] text-base leading-[26px] font-bold"><span class="size-[14px] mt-1.5 mr-1.5 border-2 border-[#999] bg-[#f00]"></span>Top Layer</button>
				<div id="layers" class="flex"></div>
				<div class="absolute right-[11px] top-1 flex h-5 border-2 border-black bg-[#c6c6c6]">
					<button aria-label="Scroll layers left" class="w-4 border-r-2 border-black"><svg class="size-3 mx-auto" viewBox="0 0 12 12"><path d="M0 6l6-6v4h5v4H6v4z" fill="#888" /></svg></button>
					<button aria-label="Scroll layers right" class="w-[15px]"><svg class="size-3 mx-auto" viewBox="0 0 12 12"><path d="M12 6L6 0v4H1v4h5v4z" /></svg></button>
				</div>
			</div>
		</section>
	</main>

	<!-- status bar -->
	<footer class="flex h-7 shrink-0 border-t-2 border-[#707070] text-[15px] leading-[29px] font-['Liberation_Mono',monospace] whitespace-pre overflow-hidden">
		<span class="w-[488px] pl-[7px] shrink-0">X:-6.2mm Y:0mm    Grid:0.1mm    (Electrical Grid)</span>
		<span class="w-[490px] mt-[5px] shrink border-x border-[#a8a8a8]"></span>
		<div class="flex ml-auto mt-[5px] leading-[25px] text-[#666] bg-[#f8f8f8] border-t border-l border-[#d0d0d0]">
			<button class="w-[72px] border-r border-[#d0d0d0]"><u class="underline-offset-2">S</u>ystem</button>
			<button class="flex justify-center w-[135px] px-[3px] border-r border-[#d0d0d0]"><span class="flex justify-center overflow-hidden"><span>Design Compiler</span></span></button>
			<button class="w-[65px] border-r border-[#d0d0d0]"><u class="underline-offset-2">H</u>elp</button>
			<button class="w-[23px] pl-[3px] text-left overflow-hidden"><u class="underline-offset-2">I</u>nstruments</button>
		</div>
	</footer>

</body>

<script>
	const components = [
		["LC-VSSOP-8_EP_3X3X", 9, 17],
		["LC-VSSOP-10", 10, 21],
		["LC-WBGA-84_8X12.5MM", 84, 90],
		["LC-WBGA-96", 96, 102],
		["LC-WCSP-5", 5, 14],
		["LC-WDFN-10L", 11, 19],
		["LC-WLCSP-8", 8, 23],
		["LC-WOB", 4, 16],
		["LC-WPAK-8", 9, 21],
		["LC-WQFN-10", 10, 24],
		["LC-WSON-8_2X2MM", 9, 17],
		["LC-WSON-8_5X6MM", 9, 17],
		["LC-WSON-10_2.5X2.", 11, 19],
		["LC-XSON-6_1X1.45M", 6, 13],
		["LC-ZIP19-1", 19, 109],
		["LC-ZIP-23", 23, 124],
	];
	const primitives = [
		["Arc", "", "0.3mm", "", "TopOverla"],
		["Pad", "0", "4.5mm", "3.5mm", "TopLayer"],
		["Track", "", "0.1mm", "", "Mechanica"],
		["Track", "", "0.1mm", "", "Mechanica"],
	];
	const layers = [
		["Bottom Layer", "bg-[#0000ff]"],
		["Mechanical 1", "bg-[#ff00ff]"],
		["Mechanical 13", "bg-[#ff00ff]"],
		["Mechanical 15", "bg-[#008000]"],
		["Top Overlay", "bg-[#ffff00]"],
		["Bottom Overlay", "bg-[#808000]"],
		["Top Paste", "bg-[#808080]"],
		["Bottom Paste", "bg-[#800000]"],
	];

	const row = (cells, selected) => `
		<tr class="h-[25px] even:h-[26px] align-top leading-[22px] ${selected ? "bg-[#0078d7] text-white" : ""}">
			${cells.map(c => `<td class="pl-0.5 border-b border-r border-[#e4e4e4]"><div class="overflow-hidden whitespace-nowrap mr-0.5">${c}</div></td>`).join("")}
		</tr>`;

	document.getElementById("components").innerHTML =
		components.map(c => row(c, c[0] === "LC-WSON-8_5X6MM")).join("");
	document.getElementById("primitives").innerHTML =
		primitives.map(p => row(p, false)).join("");

	document.getElementById("layers").innerHTML = layers.map(([name, color], i) => `
		<svg class="w-[9px] h-[29px] shrink-0" viewBox="0 0 9 29">
			<path d="${i ? "M0 0h9v29L5 15 1 29H0z" : "M8 0h1v29L5 15z"}" fill="#fff" />
			<path d="M0 29L8 1M5 15l4 14" fill="none" stroke="#777" stroke-width="1.500" />
		</svg>
		<button class="flex h-[29px] pl-[5px] pr-[3px] shrink-0 bg-white border-b-2 border-[#666]"><span class="size-[14px] mt-1.5 mr-1.5 border-2 border-[#999] ${color}"></span>${name}</button>`).join("");

	// snap grid
	const step = 51.87;
	let d = "";
	for (let i = 0; i < 60; i++) {
		const x = Math.round(6 + i * step) + 0.5;
		const y = Math.round(43 + i * step) + 0.5;
		d += `M${x} 0V3000M0 ${y}H4000`;
	}
	document.getElementById("grid").setAttribute("d", d);
</script>

</html>
